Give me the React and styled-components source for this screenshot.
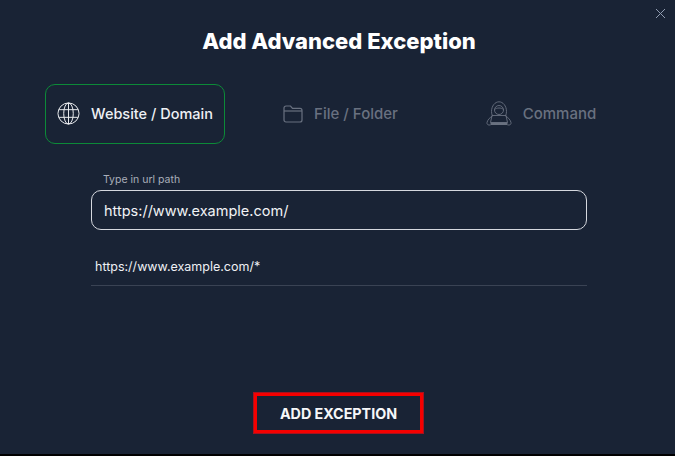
import styled, { createGlobalStyle } from "styled-components";

const GlobalStyle = createGlobalStyle`
  html, body {
    margin: 0;
    padding: 0;
    background: #000;
  }
`;

const Dialog = styled.div`
  position: relative;
  box-sizing: border-box;
  width: 675px;
  height: 454px;
  padding-top: 28px;
  display: flex;
  flex-direction: column;
  background: #192335;
  color: #fff;
  font-family: Inter, "Liberation Sans", sans-serif;
`;

const CloseButton = styled.button`
  position: absolute;
  top: 8px;
  right: 9px;
  width: 11px;
  height: 11px;
  padding: 0;
  display: flex;
  border: none;
  background: transparent;
  color: #8f9bb0;
`;

const Title = styled.h1`
  margin: 0;
  padding-left: 3px;
  font-size: 22px;
  line-height: 26px;
  font-weight: 800;
  text-align: center;
`;

const Tabs = styled.div`
  display: grid;
  grid-template-columns: 180px 183px 170px;
  gap: 24px;
  margin-top: 30px;
  padding-left: 45px;
`;

const Tab = styled.div`
  box-sizing: border-box;
  height: 60px;
  padding-bottom: 1px;
  display: flex;
  align-items: center;
  justify-content: center;
  gap: 11px;
  border-radius: 10px;
  border: 1px solid ${props => (props.$active ? "#0c8a38" : "transparent")};
  color: ${props => (props.$active ? "#eef0f4" : "#697180")};
  font-size: ${props => (props.$active ? "14.5px" : "15px")};
  font-weight: 500;
  white-space: nowrap;
`;

const Form = styled.div`
  width: 496px;
  margin: 28px 0 0 91px;
  display: flex;
  flex-direction: column;
`;

const FieldLabel = styled.label`
  margin: 1px 0 0 12px;
  font-size: 10.5px;
  line-height: 14px;
  color: #a9afba;
`;

const UrlInput = styled.div`
  box-sizing: border-box;
  height: 40px;
  margin-top: 3px;
  padding-left: 12px;
  display: flex;
  align-items: center;
  border: 1px solid #d5d8de;
  border-radius: 10px;
  font-size: 14.5px;
  color: #f1f3f6;
`;

const ResultRow = styled.div`
  box-sizing: border-box;
  height: 56px;
  padding: 0 0 11px 4px;
  display: flex;
  align-items: flex-end;
  border-bottom: 1px solid #3a4354;
  font-size: 12.5px;
  color: #eef0f4;
`;

const Footer = styled.div`
  margin-top: auto;
  margin-bottom: 21px;
  padding-left: 2px;
  display: flex;
  justify-content: center;
`;

const AddButton = styled.button`
  box-sizing: border-box;
  width: 169px;
  height: 40px;
  border: 3px solid #f50000;
  box-shadow: 0 0 0 1px #a5121f;
  background: transparent;
  color: #f6f7f9;
  font-family: inherit;
  font-size: 14.3px;
  font-weight: 700;
`;

const GlobeIcon = () => (
  <svg width="23" height="23" viewBox="0 0 24 24" fill="none" stroke="currentColor" strokeWidth="1">
    <circle cx="12" cy="12" r="11" />
    <ellipse cx="12" cy="12" rx="5" ry="11" />
    <path d="M12 1v22M2 8h20M2 16h20" />
  </svg>
);

const FolderIcon = () => (
  <svg width="20" height="18" viewBox="0 0 20 18" fill="none" stroke="currentColor" strokeWidth="1.2">
    <path d="M1 15V3a2 2 0 0 1 2-2h4.500l2 2.400H17a2 2 0 0 1 2 2V15a2 2 0 0 1-2 2H3a2 2 0 0 1-2-2z" />
    <path d="M1 6h18" />
  </svg>
);

const HackerIcon = () => (
  <svg width="26" height="25" viewBox="0 0 26 25" fill="none" stroke="currentColor" strokeWidth="0.9">
    <path d="M4.500 24H3a2 2 0 0 1-2-2.500c.7-3 3-5 5.500-6.500-.7-1.500-1-3-1-4.500C5.500 5 9 .8 13 .8s7.500 4.200 7.500 9.700c0 1.500-.3 3-1 4.500 2.500 1.500 4.800 3.500 5.500 6.500a2 2 0 0 1-2 2.500h-1.500" />
    <circle cx="13" cy="9" r="4.500" />
    <path d="M8.500 8.500c2-2 7-2 9 0" />
    <path d="M6 14.500h14l1.500 7h-17z" />
    <path d="M4.500 21.500h17V24h-17z" fill="currentColor" stroke="none" />
  </svg>
);

const CloseIcon = () => (
  <svg width="11" height="11" viewBox="0 0 11 11" fill="none" stroke="currentColor" strokeWidth="1">
    <path d="M1 1l9 9M10 1l-9 9" />
  </svg>
);

const tabs = [
  { label: "Website / Domain", icon: <GlobeIcon />, active: true },
  { label: "File / Folder", icon: <FolderIcon /> },
  { label: "Command", icon: <HackerIcon /> },
];

export default function App() {
  return (
    <>
      <GlobalStyle />
      <Dialog>
        <CloseButton aria-label="Close">
          <CloseIcon />
        </CloseButton>
        <Title>Add Advanced Exception</Title>
        <Tabs>
          {tabs.map(tab => (
            <Tab key={tab.label} $active={tab.active}>
              {tab.icon}
              {tab.label}
            </Tab>
          ))}
        </Tabs>
        <Form>
          <FieldLabel>Type in url path</FieldLabel>
          <UrlInput>https://www.example.com/</UrlInput>
          <ResultRow>https://www.example.com/*</ResultRow>
        </Form>
        <Footer>
          <AddButton>ADD EXCEPTION</AddButton>
        </Footer>
      </Dialog>
    </>
  );
}
